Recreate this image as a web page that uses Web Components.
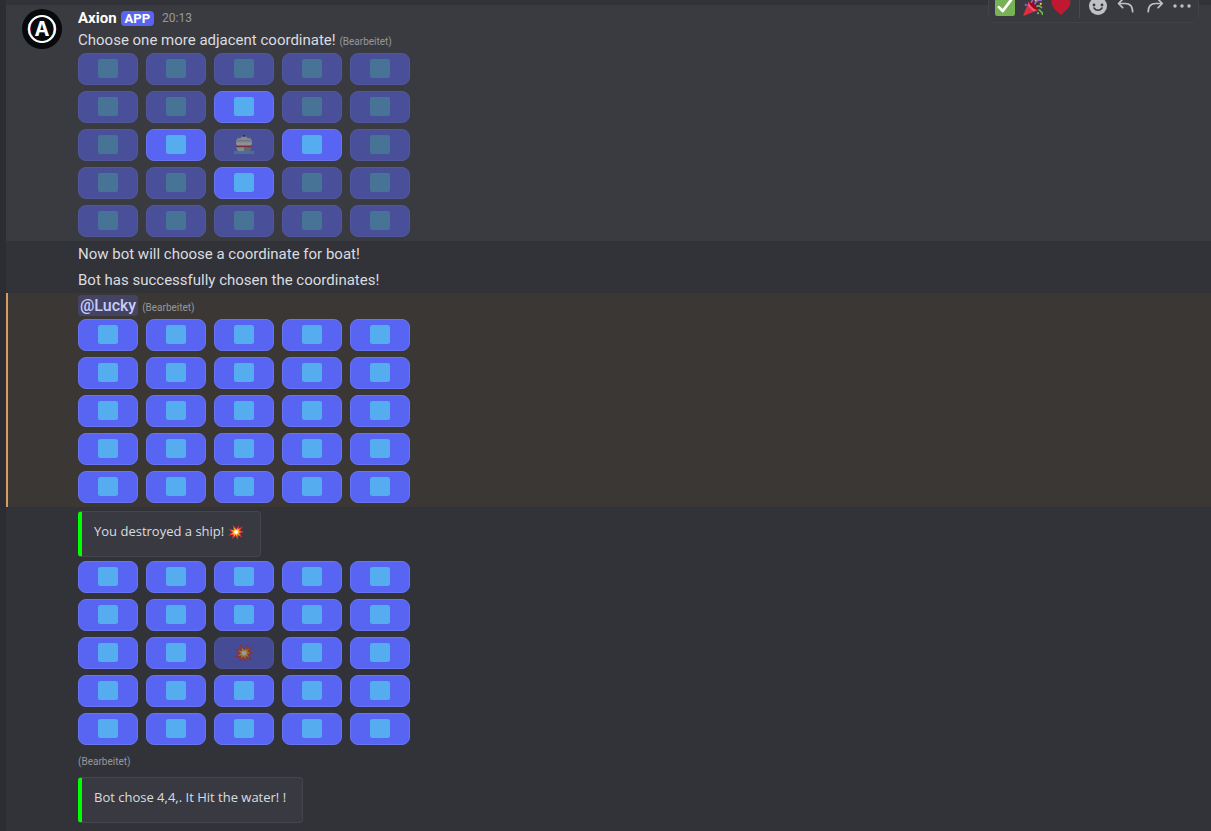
<!DOCTYPE html>
<html lang="de">
<head>
<meta charset="utf-8">
<meta name="viewport" content="width=device-width, initial-scale=1">
<title>Axion</title>
<style>
    html {
        background: #2c2d32;
    }
    body {
        margin: 0;
        color: #dbdce0;
        font-family: Roboto, "Noto Sans", sans-serif;
        font-size: 15px;
        line-height: 22px;
    }
</style>
</head>
<body>
<chat-log>
    <chat-message class="hover" author="Axion" time="20:13">
        <message-actions slot="actions"></message-actions>
        Choose one more adjacent coordinate! <edited-mark></edited-mark>
        <board-grid slot="extra" open="7,11,13,17" ship="12"></board-grid>
    </chat-message>
    <chat-message>Now bot will choose a coordinate for boat!</chat-message>
    <chat-message>Bot has successfully chosen the coordinates!</chat-message>
    <chat-message class="mention">
        <user-mention href="#lucky">@Lucky</user-mention> <edited-mark></edited-mark>
        <board-grid slot="extra"></board-grid>
    </chat-message>
    <chat-message class="bare">
        <message-embed slot="extra">You destroyed a ship! <emoji-icon name="boom"></emoji-icon></message-embed>
        <board-grid slot="extra" hit="12"></board-grid>
    </chat-message>
    <chat-message class="answer">
        <edited-mark></edited-mark>
        <message-embed slot="extra">Bot chose 4,4,. It Hit the water! !</message-embed>
    </chat-message>
</chat-log>

<script>
"use strict";

const burst = "M20 11L25 1 24 10 34 5 27 14 36 18 27 21 32 31 23 26 22 36 17 27 9 34 11 25 0 26 9 19 1 11 12 13 11 2z";

const emojis = {
    water: `<rect width="36" height="34" rx="4" fill="#55acee"/>`,
    ship: `
        <path d="M16 0h4v5h-4z" fill="#292f33"/>
        <path d="M13 3h10l1 3h5l3 3v8H4V9l3-3h5z" fill="#ccd6dd"/>
        <path d="M6 10h24v1H6z" fill="#66757f"/>
        <path d="M4 14h28l-1 6H5z" fill="#e1e8ed"/>
        <path d="M4 19h28v3H4z" fill="#be1931"/>
        <path d="M4 22h14v8H8c-2-2-3-5-4-8z" fill="#ccd6dd"/>
        <path d="M18 22h14c-1 3-2 6-4 8H18z" fill="#8899a6"/>
        <path d="M0 29h36v5H0z" fill="#55acee"/>`,
    boom: `
        <path d="${burst}" fill="#dd2e44"/>
        <path d="${burst}" transform="translate(18 18) scale(.7) translate(-18 -18)" fill="#f4900c"/>
        <path d="${burst}" transform="translate(18 18) scale(.5) translate(-18 -18)" fill="#ffcc4d"/>
        <circle cx="18" cy="18" r="4" fill="#fff"/>`,
    check: `
        <rect width="36" height="36" rx="4" fill="#77b255"/>
        <path d="M7 20l7 7L29 7" fill="none" stroke="#fff" stroke-width="5" stroke-linecap="round" stroke-linejoin="round"/>`,
    party: `
        <path d="M11 9L1 33c-1 2 0 3 2 2l24-10z" fill="#dd2e44"/>
        <path d="M11 9L8 17l11 11 8-3z" fill="#ea596e"/>
        <ellipse cx="19" cy="17" rx="4" ry="11" transform="rotate(-45 19 17)" fill="#a0041e"/>
        <path d="M14 12c4-3 4-7 2-11M21 15c2-6 6-9 13-7" fill="none" stroke="#9266cc" stroke-width="3"/>
        <path d="M24 19c4-2 8-1 10 3M28 25c4 0 3 3 5 4s3 2 1 5" fill="none" stroke="#77b255" stroke-width="3"/>
        <path d="M22 9l4-7" stroke="#ffcc4d" stroke-width="3"/>
        <circle cx="5" cy="16" r="2" fill="#9266cc"/>
        <circle cx="32" cy="14" r="2" fill="#ffcc4d"/>
        <circle cx="27" cy="31" r="2" fill="#77b255"/>`,
    heart: `<path d="M18 34C10 28 1 20 1 11 1 1 14-1 18 7 22-1 35 1 35 11c0 9-9 17-17 23z" fill="#be1931"/>`
};

class EmojiIcon extends HTMLElement {
    constructor() {
        super();
        this.attachShadow({mode: "open"});
    }

    connectedCallback() {
        this.shadowRoot.innerHTML = `
            <style>
                :host {
                    display: inline-block;
                    width: var(--emoji-size, 20px);
                    height: var(--emoji-size, 20px);
                }
                svg {
                    display: block;
                    width: 100%;
                    height: 100%;
                }
            </style>
            <svg viewBox="0 0 36 36" aria-hidden="true">${emojis[this.getAttribute("name")]}</svg>
        `;
    }
}

class EditedMark extends HTMLElement {
    constructor() {
        super();
        this.attachShadow({mode: "open"}).innerHTML = `
            <style>
                :host {
                    color: #96989f;
                    font-size: 10px;
                    line-height: 12px;
                }
            </style>
            <span>(Bearbeitet)</span>
        `;
    }
}

class UserMention extends HTMLElement {
    constructor() {
        super();
        this.attachShadow({mode: "open"});
    }

    connectedCallback() {
        this.shadowRoot.innerHTML = `
            <style>
                :host {
                    font-size: 16px;
                    line-height: 20px;
                }
                a {
                    background: #434363;
                    border-radius: 3px;
                    color: #c9cdfb;
                    font-weight: 500;
                    padding: 1px 2px;
                    text-decoration: none;
                }
            </style>
            <a href="${this.getAttribute("href")}"><slot></slot></a>
        `;
    }
}

class BoardGrid extends HTMLElement {
    constructor() {
        super();
        this.attachShadow({mode: "open"});
    }

    connectedCallback() {
        this.render();
    }

    // "open" limits the playable cells, without it every cell can be clicked
    cell(i) {
        const open = this.getAttribute("open");
        let icon = "water";
        let disabled = open !== null && !open.split(",").includes(String(i));
        if (this.getAttribute("ship") === String(i)) icon = "ship";
        if (this.getAttribute("hit") === String(i)) {
            icon = "boom";
            disabled = true;
        }
        const label = `${icon} ${i % 5 + 1},${Math.floor(i / 5) + 1}`;
        return `<button type="button" aria-label="${label}" ${disabled ? "disabled" : ""}><emoji-icon name="${icon}"></emoji-icon></button>`;
    }

    render() {
        const cells = Array.from({length: 25}, (_, i) => this.cell(i)).join("");
        this.shadowRoot.innerHTML = `
            <style>
                :host {
                    display: grid;
                    grid-template-columns: repeat(5, 60px);
                    gap: 6px 8px;
                    padding: 2px 0;
                }
                button {
                    display: flex;
                    justify-content: center;
                    height: 32px;
                    padding: 5px 0;
                    border: 1px solid #6974f3;
                    border-radius: 8px;
                    background: #5865f2;
                    cursor: pointer;
                }
                button:disabled {
                    cursor: not-allowed;
                    opacity: .5;
                }
            </style>
            ${cells}
        `;
    }
}

class MessageEmbed extends HTMLElement {
    constructor() {
        super();
        this.attachShadow({mode: "open"}).innerHTML = `
            <style>
                :host {
                    --emoji-size: 16px;
                    display: block;
                    box-sizing: border-box;
                    width: fit-content;
                    max-width: 516px;
                    margin: 2px 0;
                    padding: 10px 16px 16px 12px;
                    border: 1px solid #45464c;
                    border-left: 4px solid #00ff00;
                    border-radius: 4px;
                    background: #393a41;
                    font-family: "Open Sans", "Noto Sans", sans-serif;
                    font-size: 13px;
                    line-height: 18px;
                }
                ::slotted(emoji-icon) {
                    vertical-align: text-bottom;
                }
            </style>
            <slot></slot>
        `;
    }
}

class MessageActions extends HTMLElement {
    constructor() {
        super();
        this.attachShadow({mode: "open"}).innerHTML = `
            <style>
                :host {
                    display: flex;
                    gap: 4px;
                    padding: 4px;
                    border: 1px solid #414248;
                    border-radius: 8px;
                    background: #393a40;
                }
                button {
                    display: flex;
                    align-items: center;
                    justify-content: center;
                    width: 24px;
                    height: 24px;
                    padding: 0;
                    border: 0;
                    background: none;
                    color: #c0c1c6;
                    cursor: pointer;
                }
                hr {
                    width: 1px;
                    margin: 0 2px;
                    border: 0;
                    background: #484950;
                }
                svg {
                    fill: none;
                    stroke: currentColor;
                    stroke-width: 2;
                    stroke-linecap: round;
                    stroke-linejoin: round;
                }
            </style>
            <button type="button" aria-label="Haken"><emoji-icon name="check"></emoji-icon></button>
            <button type="button" aria-label="Party"><emoji-icon name="party"></emoji-icon></button>
            <button type="button" aria-label="Herz"><emoji-icon name="heart"></emoji-icon></button>
            <hr>
            <button type="button" aria-label="Reaktion">
                <svg width="20" height="20" viewBox="0 0 20 20">
                    <circle cx="10" cy="10" r="9" fill="currentColor" stroke="none"/>
                    <circle cx="6" cy="9" r="1.4" fill="#393a40" stroke="none"/>
                    <circle cx="14" cy="9" r="1.4" fill="#393a40" stroke="none"/>
                    <path d="M6 12c2 3 6 3 8 0" stroke="#393a40" stroke-width="1.6"/>
                </svg>
            </button>
            <button type="button" aria-label="Antworten">
                <svg width="20" height="20" viewBox="0 0 24 24"><path d="M8 4L3 9l5 5M3 9h8c6 0 9 4 9 10"/></svg>
            </button>
            <button type="button" aria-label="Weiterleiten">
                <svg width="20" height="20" viewBox="0 0 24 24"><path d="M17 4l5 5-5 5M22 9h-8c-6 0-9 4-9 10"/></svg>
            </button>
            <button type="button" aria-label="Mehr">
                <svg width="20" height="20" viewBox="0 0 20 20">
                    <g fill="currentColor" stroke="none"><circle cx="3" cy="10" r="1.7"/><circle cx="10" cy="10" r="1.7"/><circle cx="17" cy="10" r="1.7"/></g>
                </svg>
            </button>
        `;
    }
}

class ChatMessage extends HTMLElement {
    constructor() {
        super();
        this.attachShadow({mode: "open"});
    }

    connectedCallback() {
        this.render();
    }

    get avatar() {
        return `
            <svg class="avatar" width="40" height="40" viewBox="0 0 40 40" role="img" aria-label="Avatar">
                <circle cx="20" cy="20" r="20" fill="#08090b"/>
                <circle cx="19" cy="20" r="13" fill="none" stroke="#35d6d8" stroke-width="1"/>
                <circle cx="21" cy="20" r="13" fill="none" stroke="#e0437c" stroke-width="1"/>
                <circle cx="20" cy="20" r="13" fill="none" stroke="#fff" stroke-width="2"/>
                <text x="20" y="27" text-anchor="middle" font-family="Inter, sans-serif" font-size="20" font-weight="700" fill="#fff">A</text>
            </svg>
        `;
    }

    render() {
        const author = this.getAttribute("author");
        const header = author ? `
            <header>
                <span class="name">${author}</span>
                <span class="tag">APP</span>
                <time>${this.getAttribute("time")}</time>
            </header>` : "";
        this.shadowRoot.innerHTML = `
            <style>
                :host {
                    display: grid;
                    grid-template-columns: 40px minmax(0, 1fr);
                    column-gap: 16px;
                    position: relative;
                    padding: 2px 16px;
                }
                :host(.hover) {
                    background: #3a3b40;
                }
                :host(.mention) {
                    background: #3b3734;
                    box-shadow: inset 2px 0 #d69d5e;
                }
                :host(.bare) .text {
                    display: none;
                }
                :host(.answer) .text {
                    line-height: 18px;
                }
                :host(.answer) .extra {
                    margin-top: 6px;
                }
                .avatar {
                    margin-top: 2px;
                }
                .body {
                    grid-column: 2;
                }
                header {
                    display: flex;
                    align-items: center;
                    height: 22px;
                }
                .name {
                    color: #fff;
                    font-weight: 700;
                }
                .tag {
                    margin: 0 8px 0 4px;
                    padding: 0 4px;
                    border-radius: 4px;
                    background: #5865f2;
                    color: #fff;
                    font-size: 13px;
                    font-weight: 700;
                    line-height: 15px;
                }
                time {
                    color: #96989f;
                    font-size: 12px;
                }
                .extra {
                    display: grid;
                }
                slot[name="actions"] {
                    display: block;
                    position: absolute;
                    top: -16px;
                    right: 12px;
                }
            </style>
            ${author ? this.avatar : ""}
            <div class="body">
                ${header}
                <div class="text"><slot></slot></div>
                <div class="extra"><slot name="extra"></slot></div>
            </div>
            <slot name="actions"></slot>
        `;
    }
}

class ChatLog extends HTMLElement {
    constructor() {
        super();
        this.attachShadow({mode: "open"}).innerHTML = `
            <style>
                :host {
                    display: block;
                    box-sizing: border-box;
                    min-height: 100vh;
                    margin-left: 6px;
                    padding-top: 5px;
                    background: #323338;
                }
            </style>
            <main><slot></slot></main>
        `;
    }
}

customElements.define("emoji-icon", EmojiIcon);
customElements.define("edited-mark", EditedMark);
customElements.define("user-mention", UserMention);
customElements.define("board-grid", BoardGrid);
customElements.define("message-embed", MessageEmbed);
customElements.define("message-actions", MessageActions);
customElements.define("chat-message", ChatMessage);
customElements.define("chat-log", ChatLog);
</script>
</body>
</html>
